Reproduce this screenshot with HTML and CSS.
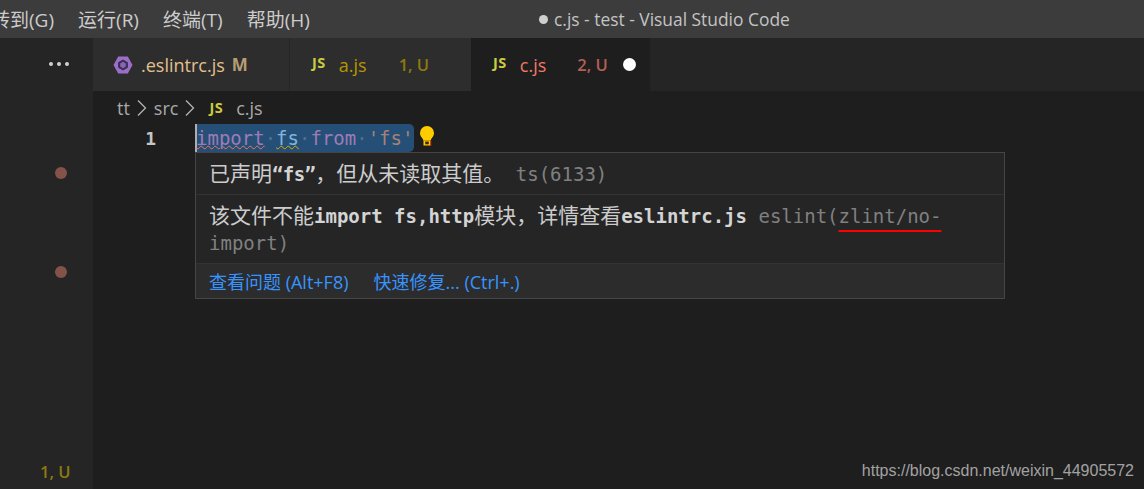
FILE: index.html
```html
<!DOCTYPE html>
<html lang="zh">
<head>
<meta charset="utf-8">
<title>c.js - test - Visual Studio Code</title>
<link rel="stylesheet" href="styles.css">
</head>
<body>
<div class="app">
  <header class="titlebar">
    <nav class="menu">
      <span class="menu-item">转到(G)</span>
      <span class="menu-item">运行(R)</span>
      <span class="menu-item">终端(T)</span>
      <span class="menu-item">帮助(H)</span>
    </nav>
    <div class="window-title"><span class="title-dot"></span>c.js - test - Visual Studio Code</div>
  </header>
  <div class="main">
    <aside class="sidebar">
      <div class="more"><i></i><i></i><i></i></div>
      <div class="marker marker-a"></div>
      <div class="marker marker-b"></div>
      <div class="side-badge">1, U</div>
    </aside>
    <section class="editor">
      <div class="tabs">
        <div class="tab tab-eslint">
          <svg class="hex" width="20" height="20" viewBox="0 0 20 20"><path d="M5.2 1.5h9.6L19.5 10l-4.7 8.5H5.2L.5 10z" fill="#9b6fc8"/><path d="M10 5l4.4 2.5v5L10 15l-4.4-2.500v-5z" fill="#3a2f52" stroke="#3a2f52"/><path d="M10 6.8l2.8 1.6v3.2L10 13.200l-2.800-1.600V8.400z" fill="#8a63b5"/></svg>
          <span class="tab-name">.eslintrc.js</span>
          <span class="tab-m">M</span>
        </div>
        <div class="tab tab-a">
          <span class="js">JS</span>
          <span class="tab-name">a.js</span>
          <span class="tab-status">1, U</span>
        </div>
        <div class="tab tab-c">
          <span class="js">JS</span>
          <span class="tab-name">c.js</span>
          <span class="tab-status">2, U</span>
          <span class="dirty"></span>
        </div>
      </div>
      <div class="crumbs">
        <span>tt</span>
        <svg width="12" height="18" viewBox="0 0 12 18"><path d="M2 1.500l7.500 7.500L2 16.500" fill="none" stroke="#b4b4b4" stroke-width="1.300"/></svg>
        <span>src</span>
        <svg width="12" height="18" viewBox="0 0 12 18"><path d="M2 1.500l7.500 7.500L2 16.500" fill="none" stroke="#b4b4b4" stroke-width="1.300"/></svg>
        <span class="js crumb-js">JS</span>
        <span>c.js</span>
      </div>
      <div class="code-line">
        <span class="line-no">1</span>
        <div class="selection"><span class="kw err">import</span><span class="ws">·</span><span class="var warn">fs</span><span class="ws">·</span><span class="kw">from</span><span class="ws">·</span><span class="str">'fs'</span></div>
        <svg class="bulb" width="14" height="20" viewBox="0 0 14 20"><path d="M7 0a7 7 0 0 0-7 7c0 2.500 1.200 4 2.300 5.200.7.800 1 1.500 1 2.300h7.400c0-.8.300-1.500 1-2.300C12.800 11 14 9.500 14 7a7 7 0 0 0-7-7z" fill="#ffcc00"/><path d="M3.500 14.500h7v5h-7z" fill="#ffcc00"/><path d="M5.200 15.500h3.600v2.800H5.200z" fill="#3a2a10"/><path d="M10.700 14.500V20" stroke="#d8301c" stroke-width="1"/></svg>
      </div>
      <div class="hover">
        <div class="hover-row row-one">已声明<b>“fs”</b>，但从未读取其值。<span class="source"> ts(6133)</span></div>
        <div class="hover-row row-two">该文件不能<b>import fs,http</b>模块，详情查看<b>eslintrc.js</b><span class="source"> eslint(<span class="red-mark">zlint/no-</span><br>import)</span></div>
        <div class="hover-actions"><a>查看问题 (Alt+F8)</a><a>快速修复... (Ctrl+.)</a></div>
      </div>
    </section>
  </div>
  <div class="watermark">https://blog.csdn.net/weixin_44905572</div>
</div>
</body>
</html>
```
FILE: styles.css
```css
* { box-sizing: border-box; }
html, body { margin: 0; height: 100%; background: #1e1e1e; overflow: hidden; }
body { font-family: "Open Sans", "Noto Sans CJK SC", sans-serif; }

.app { position: relative; width: 1144px; height: 489px; display: flex; flex-direction: column; overflow: hidden; }

.titlebar { height: 38px; flex: none; display: flex; align-items: center; background: #3c3c3c; color: #cccccc; font-size: 19px; }
.menu { display: flex; gap: 24px; margin-left: -9px; width: 548px; flex: none; }
.menu-item { white-space: nowrap; }
.window-title { display: flex; align-items: center; white-space: nowrap; color: #c4c4c4; font-size: 17.400px; }
.title-dot { width: 9px; height: 9px; border-radius: 50%; background: #cfcfcf; margin-right: 6px; }

.main { flex: 1; display: flex; min-height: 0; }

.sidebar { width: 93px; flex: none; background: #252526; display: flex; flex-direction: column; }
.more { display: flex; gap: 4px; margin: 24px 0 0 49px; height: 4px; }
.more i { width: 4px; height: 4px; border-radius: 50%; background: #d0d0d0; }
.marker { width: 12px; height: 12px; border-radius: 50%; background: #85524a; margin-left: 55px; }
.marker-a { margin-top: 101px; }
.marker-b { margin-top: 87px; }
.side-badge { margin: auto 0 6px 40px; color: #8c7a10; font-size: 16.500px; font-weight: 600; line-height: 22px; }

.editor { flex: 1; min-width: 0; background: #1e1e1e; display: flex; flex-direction: column; }

.tabs { height: 53px; flex: none; display: flex; background: #252526; font-size: 18px; }
.tab { display: flex; align-items: center; height: 53px; background: #2d2d2d; white-space: nowrap; }
.tab-eslint { width: 197px; padding-left: 20px; border-right: 1px solid #252526; }
.tab-a { width: 181px; padding-left: 22px; }
.tab-c { width: 179px; padding-left: 22px; background: #1e1e1e; }
.hex { margin-right: 8px; }
.tab-eslint .tab-name { color: #e2c08d; }
.tab-m { color: #b59d74; font-weight: 700; margin-left: 7px; font-size: 17px; }
.js { color: #cbcb41; font-weight: 700; font-size: 14.500px; letter-spacing: 0.500px; }
.tab .js { margin-top: -5px; }
.tab-a .tab-name { color: #b89500; margin-left: 13px; }
.tab-a .tab-status { color: #8c7a10; margin-left: 32px; font-size: 16.500px; font-weight: 600; }
.tab-c .tab-name { color: #f17766; margin-left: 13px; }
.tab-c .tab-status { color: #b55f55; margin-left: 31px; font-size: 16.500px; font-weight: 600; }
.dirty { width: 13px; height: 13px; border-radius: 50%; background: #ffffff; margin-left: 15px; margin-top: -1px; }

.crumbs { height: 33px; flex: none; display: flex; align-items: center; padding-left: 24px; color: #a9a9a9; font-size: 18px; }
.crumbs svg { margin: 0 6px; }
.crumb-js { margin: 0 13px 0 7px; }

.code-line { height: 28px; flex: none; display: flex; align-items: center; font-family: "DejaVu Sans Mono", monospace; font-size: 19px; }
.line-no { width: 102px; flex: none; text-align: right; padding-right: 39px; color: #c6c6c6; font-weight: 700; font-size: 18px; }
.selection { width: 219px; height: 28px; line-height: 29px; background: #264f78; box-shadow: inset 2px 0 0 #aeafad; border-radius: 0 5px 5px 0; white-space: nowrap; padding-left: 1px; }
.kw { color: #9d7cb4; }
.var { color: #7fb5dc; }
.str { color: #a58275; }
.ws { color: #4d7190; }
.err { text-decoration: underline wavy #f0735f; text-decoration-thickness: 1px; text-underline-offset: 0; }
.warn { text-decoration: underline wavy #d4ae00; text-decoration-thickness: 1px; text-underline-offset: 0; }
.bulb { margin-left: 6px; margin-top: -4px; }

.hover { width: 810px; height: 147px; flex: none; margin-left: 102px; background: #252526; border: 1px solid #454545; font-family: "Noto Sans CJK SC", sans-serif; font-size: 21px; color: #cccccc; display: flex; flex-direction: column; }
.hover b, .source { font-family: "DejaVu Sans Mono", monospace; font-size: 19px; line-height: 1; }
.hover b { font-weight: 700; color: #d4d4d4; }
.row-one b { letter-spacing: -0.600px; }
.hover-row { padding: 0 13px; white-space: nowrap; }
.row-one { height: 42px; line-height: 38px; border-bottom: 1px solid #333333; }
.row-two { height: 69px; padding-top: 6px; line-height: 27px; border-bottom: 1px solid #333333; }
.source { color: #808080; }
.red-mark { text-decoration: underline 2px #ff0000; text-underline-offset: 7px; }
.hover-actions { flex: 1; background: #2c2c2d; display: flex; gap: 25px; align-items: center; padding-left: 13px; font-family: "Open Sans", "Noto Sans CJK SC", sans-serif; font-size: 18px; color: #3794ff; }

.watermark { position: absolute; right: 10px; bottom: 8px; font-family: "Liberation Sans", sans-serif; font-size: 16px; line-height: 20px; color: #a2a2a2; white-space: nowrap; }
```
